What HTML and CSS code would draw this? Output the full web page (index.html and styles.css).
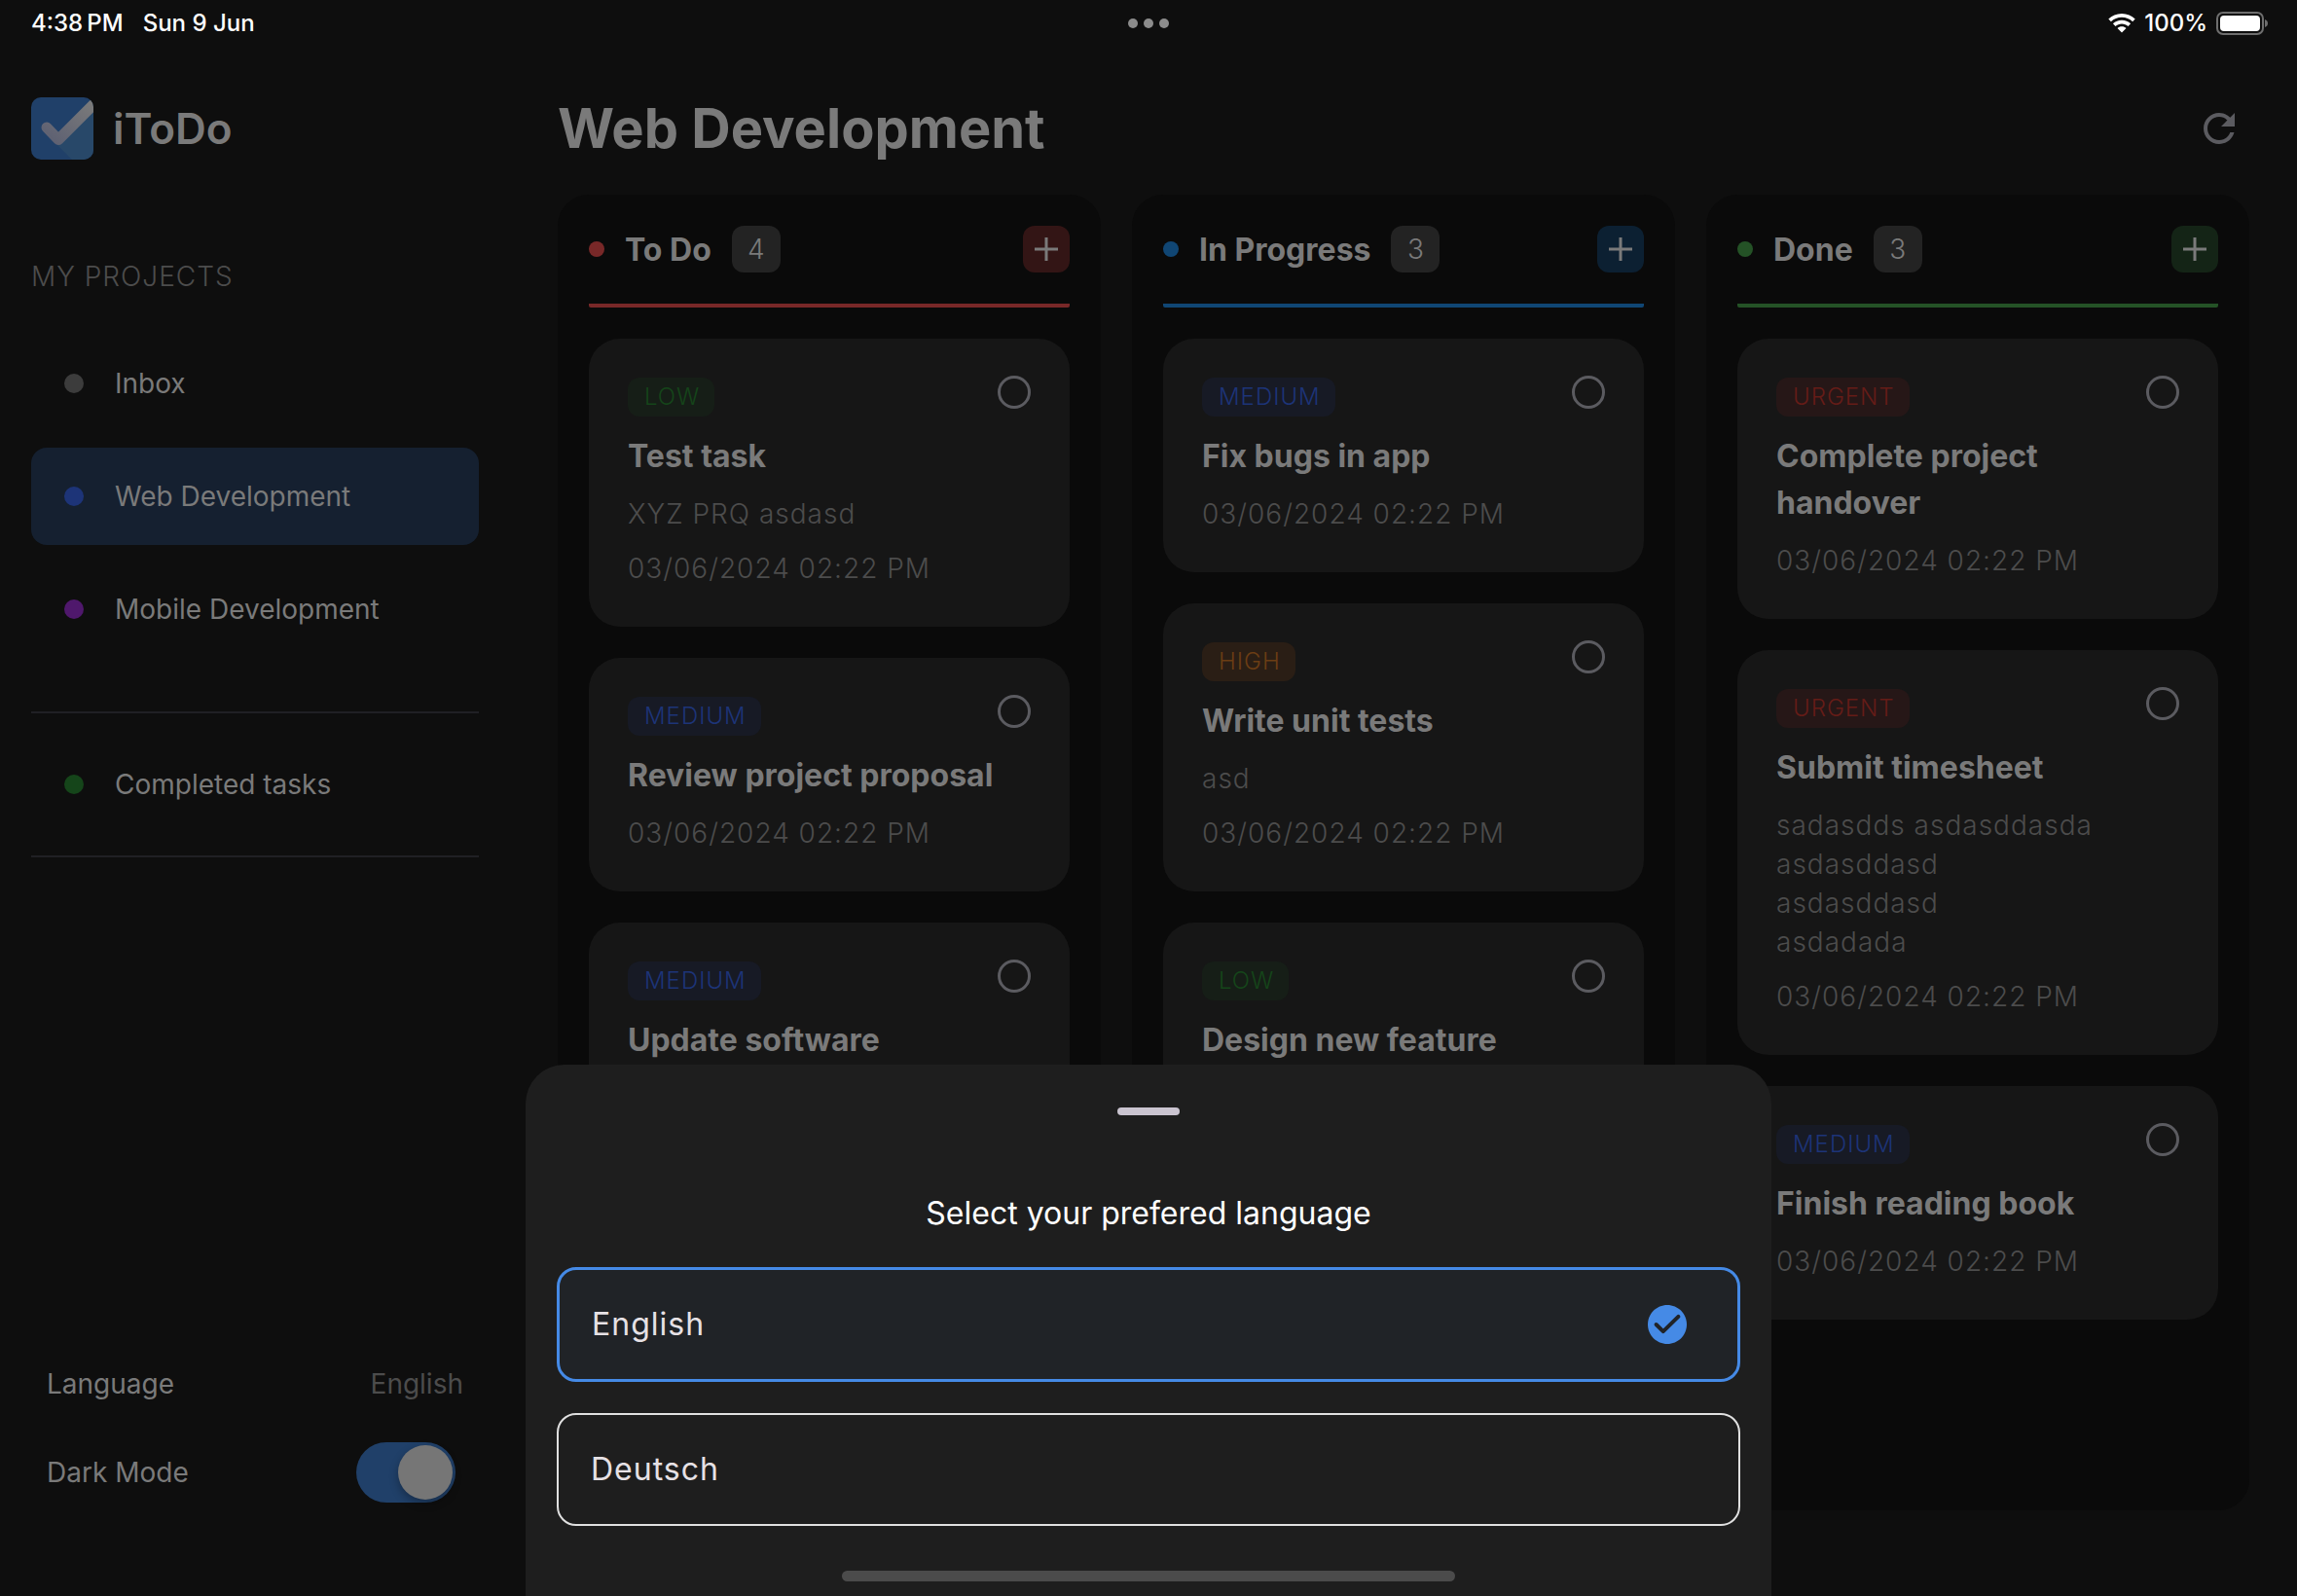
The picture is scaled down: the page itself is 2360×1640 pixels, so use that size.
FILE: index.html
```html
<!DOCTYPE html>
<html lang="en">
<head>
<meta charset="utf-8">
<meta name="viewport" content="width=device-width, initial-scale=1">
<title>iToDo</title>
<link rel="stylesheet" href="styles.css">
</head>
<body>
<div class="app">
  <header class="status">
    <div class="status-side status-left"><span>4:38&thinsp;PM</span><span>Sun 9 Jun</span></div>
    <div class="status-dots"><i></i><i></i><i></i></div>
    <div class="status-side status-right">
      <svg class="wifi" viewBox="0 0 28 20" aria-hidden="true"><path d="M14 0C8.600 0 3.800 2.100 .3 5.500L2.900 8.200C5.800 5.400 9.700 3.800 14 3.800S22.200 5.400 25.100 8.200L27.700 5.500C24.200 2.100 19.400 0 14 0ZM14 6.700C10.500 6.700 7.300 8 4.900 10.200L7.500 12.900C9.200 11.400 11.500 10.400 14 10.400S18.800 11.400 20.500 12.900L23.100 10.200C20.700 8 17.500 6.700 14 6.700ZM14 13.300C12.200 13.300 10.700 13.900 9.500 14.900L14 19.600L18.500 14.900C17.300 13.900 15.800 13.300 14 13.300Z" fill="#fff"/></svg>
      <span>100%</span>
      <svg class="battery" viewBox="0 0 54 26" aria-hidden="true"><rect x="1" y="2" width="47" height="22" rx="6" fill="none" stroke="#6e6e6e" stroke-width="2"/><rect x="4" y="5" width="41" height="16" rx="4" fill="#fff"/><path d="M50 9c2 .7 3 2.200 3 4s-1 3.300-3 4z" fill="#6e6e6e"/></svg>
    </div>
  </header>

  <div class="body">
    <aside class="sidebar">
      <div class="brand">
        <svg class="logo" viewBox="0 0 64 64" aria-hidden="true">
          <defs>
            <clipPath id="tile"><rect width="64" height="64" rx="10"/></clipPath>
            <linearGradient id="tick" x1="0" y1="1" x2="1" y2="0"><stop offset="0" stop-color="#5d6072"/><stop offset="1" stop-color="#7a7a7a"/></linearGradient>
          </defs>
          <g clip-path="url(#tile)">
            <rect width="64" height="64" fill="#204069"/>
            <path d="M27 49L64 12V64H42Z" fill="#284869"/>
            <path d="M16 31L28 43.500L64 7.500" fill="none" stroke="url(#tick)" stroke-width="11" stroke-linecap="round" stroke-linejoin="round"/>
          </g>
        </svg>
        <span>iToDo</span>
      </div>
      <h2 class="caption">MY PROJECTS</h2>
      <nav class="projects">
        <a class="item" href="#inbox"><i class="dot gray"></i>Inbox</a>
        <a class="item active" href="#web"><i class="dot indigo"></i>Web Development</a>
        <a class="item" href="#mobile"><i class="dot purple"></i>Mobile Development</a>
      </nav>
      <div class="completed">
        <a class="item" href="#completed"><i class="dot leaf"></i>Completed tasks</a>
      </div>
      <div class="settings">
        <div class="setting"><span>Language</span><button class="lang" type="button">English</button></div>
        <div class="setting"><label for="dark">Dark Mode</label><input class="switch" type="checkbox" id="dark" checked></div>
      </div>
    </aside>

    <main class="main">
      <div class="title-row">
        <h1>Web Development</h1>
        <button class="refresh" type="button" aria-label="Refresh"><svg viewBox="0 0 24 24"><path d="M17.650 6.350C16.200 4.900 14.210 4 12 4c-4.420 0-7.990 3.580-7.990 8s3.570 8 7.990 8c3.730 0 6.840-2.550 7.730-6h-2.080c-.82 2.330-3.040 4-5.650 4-3.310 0-6-2.690-6-6s2.690-6 6-6c1.660 0 3.140.69 4.220 1.780L13 11h7V4l-2.350 2.350z" fill="#5b5b60"/></svg></button>
      </div>
      <div class="board">
        <section class="column red">
          <header class="column-head"><i></i><h2>To Do</h2><span class="count">4</span><button type="button" aria-label="Add to To Do"><svg viewBox="0 0 24 24"><path d="M12 0V24M0 12H24"/></svg></button></header>
          <article class="card">
            <div class="card-top"><span class="tag low">LOW</span><input type="checkbox" aria-label="Test task"></div>
            <h3>Test task</h3><p>XYZ PRQ asdasd</p><time>03/06/2024 02:22 PM</time>
          </article>
          <article class="card">
            <div class="card-top"><span class="tag medium">MEDIUM</span><input type="checkbox" aria-label="Review project proposal"></div>
            <h3>Review project proposal</h3><time>03/06/2024 02:22 PM</time>
          </article>
          <article class="card">
            <div class="card-top"><span class="tag medium">MEDIUM</span><input type="checkbox" aria-label="Update software"></div>
            <h3>Update software</h3><time>03/06/2024 02:22 PM</time>
          </article>
        </section>
        <section class="column blue">
          <header class="column-head"><i></i><h2>In Progress</h2><span class="count">3</span><button type="button" aria-label="Add to In Progress"><svg viewBox="0 0 24 24"><path d="M12 0V24M0 12H24"/></svg></button></header>
          <article class="card">
            <div class="card-top"><span class="tag medium">MEDIUM</span><input type="checkbox" aria-label="Fix bugs in app"></div>
            <h3>Fix bugs in app</h3><time>03/06/2024 02:22 PM</time>
          </article>
          <article class="card">
            <div class="card-top"><span class="tag high">HIGH</span><input type="checkbox" aria-label="Write unit tests"></div>
            <h3>Write unit tests</h3><p>asd</p><time>03/06/2024 02:22 PM</time>
          </article>
          <article class="card">
            <div class="card-top"><span class="tag low">LOW</span><input type="checkbox" aria-label="Design new feature"></div>
            <h3>Design new feature</h3><time>03/06/2024 02:22 PM</time>
          </article>
        </section>
        <section class="column green">
          <header class="column-head"><i></i><h2>Done</h2><span class="count">3</span><button type="button" aria-label="Add to Done"><svg viewBox="0 0 24 24"><path d="M12 0V24M0 12H24"/></svg></button></header>
          <article class="card">
            <div class="card-top"><span class="tag urgent">URGENT</span><input type="checkbox" aria-label="Complete project handover"></div>
            <h3>Complete project handover</h3><time>03/06/2024 02:22 PM</time>
          </article>
          <article class="card">
            <div class="card-top"><span class="tag urgent">URGENT</span><input type="checkbox" aria-label="Submit timesheet"></div>
            <h3>Submit timesheet</h3><p>sadasdds asdasddasda<br>asdasddasd<br>asdasddasd<br>asdadada</p><time>03/06/2024 02:22 PM</time>
          </article>
          <article class="card">
            <div class="card-top"><span class="tag medium">MEDIUM</span><input type="checkbox" aria-label="Finish reading book"></div>
            <h3>Finish reading book</h3><time>03/06/2024 02:22 PM</time>
          </article>
        </section>
      </div>
    </main>
  </div>

  <section class="sheet" role="dialog" aria-labelledby="sheet-title">
    <div class="grip"></div>
    <h2 id="sheet-title">Select your prefered language</h2>
    <button class="option selected" type="button">English<svg viewBox="0 0 24 24" aria-hidden="true"><path d="M12 2C6.480 2 2 6.480 2 12s4.480 10 10 10 10-4.480 10-10S17.520 2 12 2z" fill="#458ae6"/><path d="M6.300 12L9.900 15.600L17.700 7.900" fill="none" stroke="#202327" stroke-width="2" stroke-linecap="round" stroke-linejoin="round"/></svg></button>
    <button class="option" type="button">Deutsch</button>
    <div class="home"></div>
  </section>
</div>
</body>
</html>
```

FILE: styles.css
```css
* { box-sizing: border-box; }
body { margin: 0; background: #0e0e0e; color: #7a7a7a; font-family: Inter, "Noto Sans", sans-serif; font-size: 28px; line-height: 40px; font-weight: 400; }
h1, h2, h3, p { margin: 0; }
button { border: 0; padding: 0; background: none; font: inherit; color: inherit; letter-spacing: inherit; }
a { color: inherit; text-decoration: none; }

.app { position: relative; min-height: 100vh; display: flex; flex-direction: column; overflow: hidden; }

.status { display: grid; grid-template-columns: 1fr auto 1fr; align-items: center; height: 48px; padding: 0 29px; color: #fff; font-size: 24px; line-height: 32px; font-weight: 500; }
.status-side { display: flex; align-items: center; gap: 20px; }
.status-left { padding-left: 3px; }
.status-right { justify-content: flex-end; gap: 9px; }
.status-dots { display: flex; gap: 6px; }
.status-dots i { width: 10px; height: 10px; border-radius: 50%; background: #8c8c8c; }
.wifi { width: 28px; height: 20px; }
.battery { width: 54px; height: 26px; }

.body { flex: 1; display: flex; }
.sidebar { width: 524px; padding: 52px 32px 96px; display: flex; flex-direction: column; }
.brand { display: flex; align-items: center; gap: 20px; font-size: 44px; line-height: 64px; font-weight: 600; }
.logo { width: 64px; height: 64px; }
.caption { margin: 100px 0 40px; font-size: 28px; line-height: 40px; font-weight: 300; letter-spacing: 1px; color: #4c4c4c; }
.projects { display: flex; flex-direction: column; gap: 16px; }
.item { display: flex; align-items: center; gap: 32px; width: 460px; height: 100px; padding: 0 34px; border-radius: 16px; }
.item.active { background: #152030; }
.dot { width: 20px; height: 20px; border-radius: 50%; }
.gray { background: #3c3c3c; }
.indigo { background: #1d3478; }
.purple { background: #4f186c; }
.leaf { background: #15451a; }
.completed { width: 460px; margin-top: 55px; padding: 23px 0; border: solid #202024; border-width: 2px 0; }
.settings { margin-top: auto; width: 460px; padding: 0 16px; display: flex; flex-direction: column; gap: 40px; }
.setting { display: flex; align-items: center; justify-content: space-between; }
.lang { color: #4c4c4c; }
.switch { appearance: none; width: 102px; height: 62px; margin: 0 8px 0 0; padding: 3px; border-radius: 31px; background: #204069; display: flex; justify-content: flex-end; }
.switch::before { content: ""; width: 56px; height: 56px; border-radius: 50%; background: #767676; box-shadow: 0 4px 10px rgba(0, 0, 0, .3); }

.main { flex: 1; padding: 44px 49px 88px; display: flex; flex-direction: column; }
.title-row { display: flex; align-items: center; justify-content: space-between; height: 80px; padding-right: 7px; margin-bottom: 28px; }
h1 { font-size: 56px; line-height: 80px; font-weight: 700; }
.refresh, .refresh svg { display: block; width: 48px; height: 48px; }

.board { flex: 1; display: grid; grid-template-columns: repeat(3, 1fr); gap: 32px; }
.column { padding: 32px; border-radius: 32px; background: #0a0a0a; display: flex; flex-direction: column; gap: 32px; }
.column-head { display: flex; align-items: center; gap: 21px; height: 84px; padding-bottom: 32px; border-bottom: 4px solid var(--accent); border-radius: 2px; }
.column-head i { width: 16px; height: 16px; border-radius: 50%; background: var(--accent); }
.column-head h2 { padding-top: 2px; font-size: 32px; line-height: 48px; font-weight: 700; }
.count { width: 50px; height: 48px; border-radius: 12px; background: #232323; line-height: 48px; text-align: center; font-weight: 300; }
.column-head button { display: grid; place-items: center; width: 48px; height: 48px; margin-left: auto; border-radius: 12px; background: var(--tint); }
.column-head button svg { width: 24px; height: 24px; stroke: #7a7a7a; stroke-width: 3; }
.red { --accent: #782828; --tint: #331515; }
.blue { --accent: #104674; --tint: #0c2032; }
.green { --accent: #245226; --tint: #142416; }

.card { display: flex; flex-direction: column; gap: 16px; padding: 38px 40px 40px; border-radius: 32px; background: #161616; }
.card-top { display: flex; justify-content: space-between; align-items: flex-start; }
.card-top input { appearance: none; width: 34px; height: 34px; margin: 0; border: 3px solid #5b5b60; border-radius: 50%; }
.tag { margin-top: 2px; padding: 0 15px 0 17px; border-radius: 12px; font-size: 24px; line-height: 40px; font-weight: 300; letter-spacing: 1px; }
.low { color: #15451a; background: #161e17; }
.medium { color: #1d3478; background: #171a25; }
.high { color: #6b3d14; background: #2a1e15; }
.urgent { color: #651c17; background: #261717; }
.card h3 { margin: 1px 0 -1px; font-size: 32px; line-height: 48px; font-weight: 700; }
.card p, .card time { color: #4c4c4c; font-weight: 300; letter-spacing: 1px; }

.sheet { position: absolute; left: 0; right: 0; bottom: 0; width: 1280px; max-width: 100%; margin: 0 auto; padding: 44px 32px 15px; border-radius: 40px 40px 0 0; background: #1e1e1e; display: flex; flex-direction: column; align-items: center; }
.grip { width: 64px; height: 8px; border-radius: 4px; background: #cac4d0; }
.sheet h2 { margin: 77px 0 31px; font-size: 32px; line-height: 48px; font-weight: 400; color: #fff; }
.option { display: flex; align-items: center; justify-content: space-between; width: 100%; height: 116px; padding: 0 48px 0 33px; border: 2px solid #e0e0e0; border-radius: 20px; color: #e6e1e5; font-size: 32px; line-height: 48px; letter-spacing: 1px; }
.option.selected { height: 118px; margin-bottom: 32px; border: 3px solid #458ae6; background: #202327; }
.option svg { width: 48px; height: 48px; }
.home { width: 630px; height: 11px; margin-top: 46px; border-radius: 6px; background: #4b4b4b; }
```
